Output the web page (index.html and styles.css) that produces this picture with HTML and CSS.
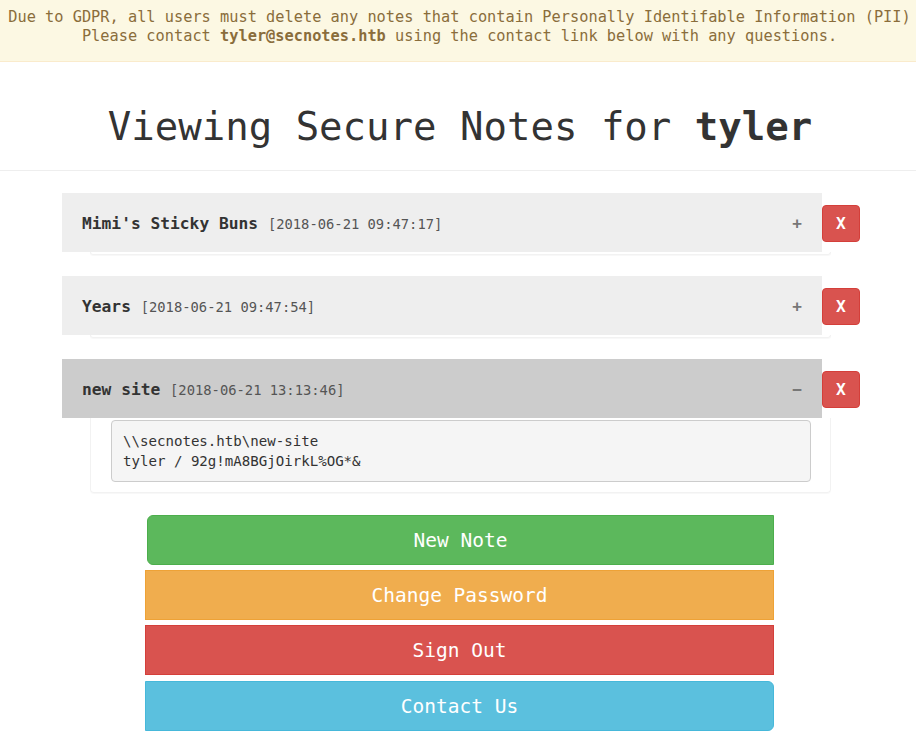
FILE: index.html
```html
<!DOCTYPE html>
<html lang="en">
<head>
<meta charset="utf-8">
<title>Secure Notes</title>
<link rel="stylesheet" href="styles.css">
</head>
<body>
<div class="alert">Due to GDPR, all users must delete any notes that contain Personally Identifable Information (PII)<br>Please contact <strong>tyler@secnotes.htb</strong> using the contact link below with any questions.</div>

<div class="page-header">
  <h1>Viewing Secure Notes for <strong>tyler</strong></h1>
</div>

<div class="notes">
  <div class="note">
    <div class="note-row">
      <div class="note-heading">
        <span class="note-title">Mimi's Sticky Buns <small>[2018-06-21 09:47:17]</small></span>
        <span class="toggle">+</span>
      </div>
      <button class="btn-del">X</button>
    </div>
    <div class="note-body collapsed"></div>
  </div>

  <div class="note">
    <div class="note-row">
      <div class="note-heading">
        <span class="note-title">Years <small>[2018-06-21 09:47:54]</small></span>
        <span class="toggle">+</span>
      </div>
      <button class="btn-del">X</button>
    </div>
    <div class="note-body collapsed"></div>
  </div>

  <div class="note">
    <div class="note-row">
      <div class="note-heading open">
        <span class="note-title">new site <small>[2018-06-21 13:13:46]</small></span>
        <span class="toggle">&minus;</span>
      </div>
      <button class="btn-del">X</button>
    </div>
    <div class="note-body">
      <pre class="note-text">\\secnotes.htb\new-site
tyler / 92g!mA8BGjOirkL%OG*&amp;</pre>
    </div>
  </div>
</div>

<div class="actions">
  <a class="btn btn-green">New Note</a>
  <a class="btn btn-orange">Change Password</a>
  <a class="btn btn-red">Sign Out</a>
  <a class="btn btn-blue">Contact Us</a>
</div>
</body>
</html>
```

FILE: styles.css
```css
html, body {
  margin: 0;
  padding: 0;
  background: #fff;
}
body {
  font-family: "DejaVu Sans Mono", monospace;
  color: #333;
}
.alert {
  background: #fcf8e3;
  color: #8a6d3b;
  border-bottom: 1px solid #faebcc;
  text-align: center;
  font-size: 15.3px;
  line-height: 19px;
  padding: 8px 0 15px 3px;
}
.alert strong {
  font-weight: bold;
}
.page-header {
  margin-top: 43px;
  padding-bottom: 22px;
  border-bottom: 1px solid #eee;
}
.page-header h1 {
  margin: 0;
  padding-left: 4px;
  font-size: 39px;
  line-height: 43px;
  font-weight: normal;
  text-align: center;
  color: #333;
}
.page-header h1 strong {
  font-weight: bold;
}
.notes {
  margin: 22px 0 0 62px;
  width: 798px;
}
.note {
  margin-bottom: 21px;
}
.note-row {
  display: flex;
  align-items: center;
}
.note-heading {
  box-sizing: border-box;
  width: 760px;
  height: 59px;
  background: #eee;
  padding: 0 20px;
  display: flex;
  align-items: center;
  justify-content: space-between;
}
.note-heading.open {
  background: #ccc;
}
.note-title {
  font-size: 16.25px;
  font-weight: bold;
  color: #333;
  padding-top: 2px;
}
.note-title small {
  font-size: 85%;
  font-weight: normal;
  color: #555;
}
.toggle {
  font-size: 16px;
  font-weight: bold;
  color: #777;
  padding-top: 2px;
}
.btn-del {
  box-sizing: border-box;
  width: 38px;
  height: 37px;
  padding: 0;
  margin: 2px 0 0;
  background: #d9534f;
  border: 1px solid #d43f3a;
  border-radius: 4px;
  color: #fff;
  font-family: "DejaVu Sans Mono", monospace;
  font-size: 16.3px;
  font-weight: bold;
  line-height: 35px;
  text-align: center;
}
.note-body {
  box-sizing: border-box;
  margin-left: 28px;
  width: 741px;
  border: 1px solid #f2f2f2;
  border-top: 0;
  border-radius: 0 0 4px 4px;
  box-shadow: 0 1px 1px rgba(0, 0, 0, 0.03);
  padding: 2px 19px 10px 20px;
}
.note-body.collapsed {
  height: 3px;
  padding: 0;
}
.note-text {
  margin: 0;
  background: #f5f5f5;
  border: 1px solid #ccc;
  border-radius: 4px;
  padding: 10px 11px;
  font-family: "DejaVu Sans Mono", monospace;
  font-size: 14.1px;
  line-height: 20px;
  color: #333;
}
.actions {
  margin: 22px 0 0 145px;
  width: 629px;
  display: flex;
  flex-direction: column;
  gap: 5px;
}
.btn {
  box-sizing: border-box;
  height: 50px;
  display: flex;
  align-items: center;
  justify-content: center;
  color: #fff;
  font-size: 19.5px;
  border: 1px solid transparent;
  text-decoration: none;
}
.btn-green {
  background: #5cb85c;
  border-color: #4cae4c;
  margin-left: 2px;
  border-radius: 6px 0 0 6px;
}
.btn-orange {
  background: #f0ad4e;
  border-color: #eea236;
}
.btn-red {
  background: #d9534f;
  border-color: #d43f3a;
}
.btn-blue {
  background: #5bc0de;
  border-color: #46b8da;
  border-radius: 0 6px 6px 0;
  margin-top: 1px;
}
```
